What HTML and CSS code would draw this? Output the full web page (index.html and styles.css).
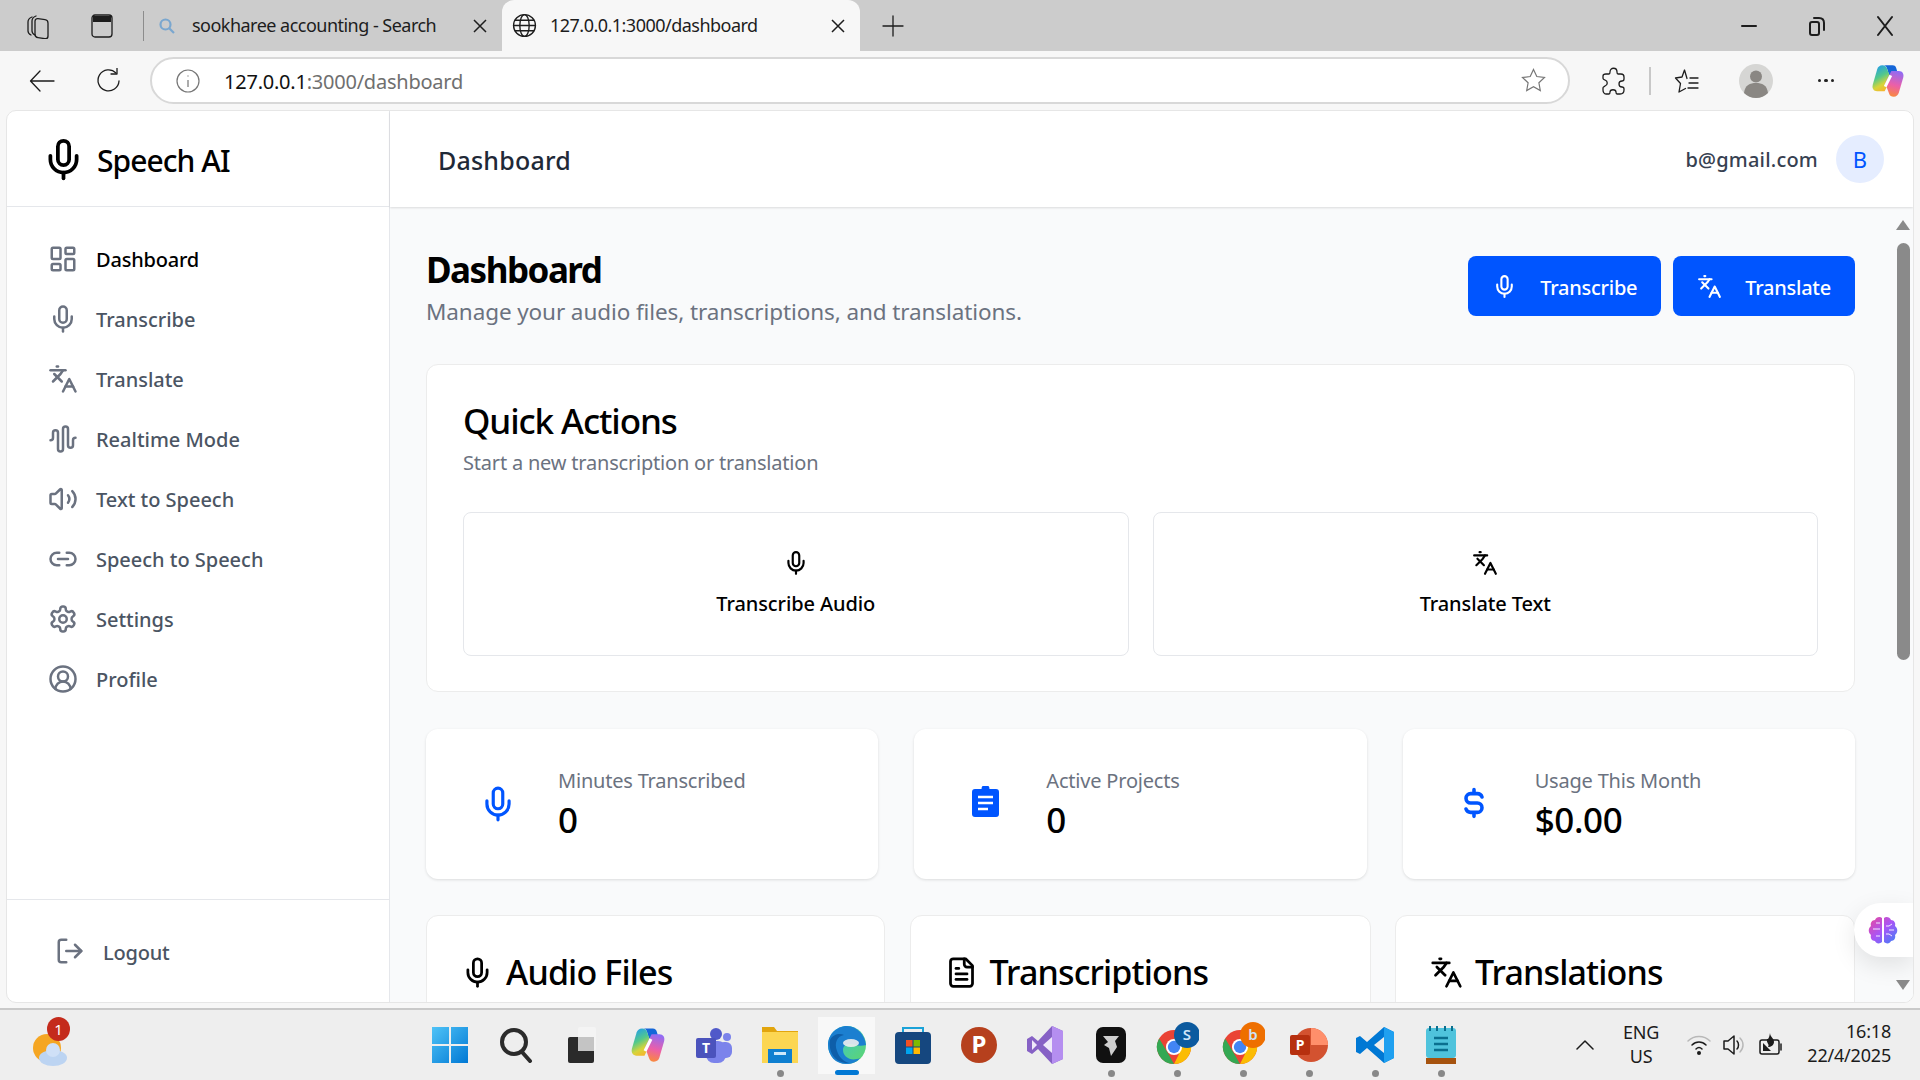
FILE: index.html
```html
<!DOCTYPE html>
<html lang="en">
<head>
<meta charset="utf-8">
<title>Speech AI</title>
<link rel="stylesheet" href="styles.css">
</head>
<body>
<svg class="defs" width="0" height="0" aria-hidden="true">
<defs>
<symbol id="i-dash" viewBox="0 0 24 24"><rect x="3" y="3" width="7" height="9" rx="1"/><rect x="14" y="3" width="7" height="5" rx="1"/><rect x="14" y="12" width="7" height="9" rx="1"/><rect x="3" y="16" width="7" height="5" rx="1"/></symbol>
<symbol id="i-mic" viewBox="0 0 24 24"><path d="M12 2a3 3 0 0 0-3 3v7a3 3 0 0 0 6 0V5a3 3 0 0 0-3-3Z"/><path d="M19 10v2a7 7 0 0 1-14 0v-2"/><path d="M12 19v3"/></symbol>
<symbol id="i-lang" viewBox="0 0 24 24"><path d="m5 8 6 6"/><path d="m4 14 6-6 2-3"/><path d="M2 5h12"/><path d="M7 2h1"/><path d="m22 22-5-10-5 10"/><path d="M14 18h6"/></symbol>
<symbol id="i-wave" viewBox="0 0 24 24"><path d="M2 13a2 2 0 0 0 2-2V7a2 2 0 0 1 4 0v13a2 2 0 0 0 4 0V4a2 2 0 0 1 4 0v13a2 2 0 0 0 4 0v-4a2 2 0 0 1 2-2"/></symbol>
<symbol id="i-vol" viewBox="0 0 24 24"><path d="M11 4.702a.705.705 0 0 0-1.203-.498L6.413 7.587A1.4 1.4 0 0 1 5.416 8H3a1 1 0 0 0-1 1v6a1 1 0 0 0 1 1h2.416a1.4 1.4 0 0 1 .997.413l3.383 3.384A.705.705 0 0 0 11 19.298z"/><path d="M16 9a5 5 0 0 1 0 6"/><path d="M19.4 18.4a9 9 0 0 0 0-12.7"/></symbol>
<symbol id="i-link" viewBox="0 0 24 24"><path d="M9 17H7A5 5 0 0 1 7 7h2"/><path d="M15 7h2a5 5 0 1 1 0 10h-2"/><path d="M8 12h8"/></symbol>
<symbol id="i-gear" viewBox="0 0 24 24"><path d="M12.22 2h-.44a2 2 0 0 0-2 2v.18a2 2 0 0 1-1 1.73l-.43.25a2 2 0 0 1-2 0l-.15-.08a2 2 0 0 0-2.73.73l-.22.38a2 2 0 0 0 .73 2.73l.15.1a2 2 0 0 1 1 1.72v.51a2 2 0 0 1-1 1.74l-.15.09a2 2 0 0 0-.73 2.73l.22.38a2 2 0 0 0 2.73.73l.15-.08a2 2 0 0 1 2 0l.43.25a2 2 0 0 1 1 1.73V20a2 2 0 0 0 2 2h.44a2 2 0 0 0 2-2v-.18a2 2 0 0 1 1-1.73l.43-.25a2 2 0 0 1 2 0l.15.08a2 2 0 0 0 2.73-.73l.22-.39a2 2 0 0 0-.73-2.73l-.15-.08a2 2 0 0 1-1-1.74v-.5a2 2 0 0 1 1-1.74l.15-.09a2 2 0 0 0 .73-2.73l-.22-.38a2 2 0 0 0-2.73-.73l-.15.08a2 2 0 0 1-2 0l-.43-.25a2 2 0 0 1-1-1.73V4a2 2 0 0 0-2-2z"/><circle cx="12" cy="12" r="3"/></symbol>
<symbol id="i-user" viewBox="0 0 24 24"><circle cx="12" cy="12" r="10"/><circle cx="12" cy="10" r="4"/><path d="M18 20a6 6 0 0 0-12 0"/></symbol>
<symbol id="i-out" viewBox="0 0 24 24"><path d="M9 21H5a2 2 0 0 1-2-2V5a2 2 0 0 1 2-2h4"/><path d="m16 17 5-5-5-5"/><path d="M21 12H9"/></symbol>
<symbol id="i-file" viewBox="0 0 24 24"><path d="M15 2H6a2 2 0 0 0-2 2v16a2 2 0 0 0 2 2h12a2 2 0 0 0 2-2V7Z"/><path d="M14 2v4a2 2 0 0 0 2 2h4"/><path d="M10 9H8"/><path d="M16 13H8"/><path d="M16 17H8"/></symbol>
<symbol id="i-chrome" viewBox="0 0 40 40"><circle cx="20" cy="20" r="18" fill="#ea4335" stroke="none"/><path d="M20 38A18 18 0 0 1 4.4 11l10 17Z" fill="#34a853" stroke="none"/><path d="M20 38a18 18 0 0 0 15.6-27H20l5 17Z" fill="#fbbc04" stroke="none"/><circle cx="20" cy="20" r="8.5" fill="#fff" stroke="none"/><circle cx="20" cy="20" r="6.5" fill="#4285f4" stroke="none"/></symbol>
<linearGradient id="g-cop" x1="0.2" y1="0" x2="0.6" y2="1"><stop offset="0" stop-color="#1e9bf0"/><stop offset=".45" stop-color="#54c98a"/><stop offset=".75" stop-color="#d6d43a"/><stop offset="1" stop-color="#f7b52c"/></linearGradient>
<linearGradient id="g-cop2" x1="0.6" y1="0" x2="0.4" y2="1"><stop offset="0" stop-color="#8f6cf5"/><stop offset=".55" stop-color="#ec5fa8"/><stop offset="1" stop-color="#f98a3c"/></linearGradient>
<symbol id="i-copilot" viewBox="0 0 32 32"><path d="M12 2h8c2 0 3 1 3.500 3L26 14h-8l-3-9.500C14.500 3 13.500 2 12 2Z" fill="#1466d8" stroke="none"/><path d="M11 2C8.500 2 7 3.500 6.400 5.500L2.500 19c-1 3.500.8 6 3.800 6H13l5.500-11-3.600-9.500C14.300 3 13 2 11 2Z" fill="url(#g-cop)" stroke="none"/><path d="M21 30c2.500 0 4-1.500 4.600-3.500L29.500 13c1-3.500-.8-6-3.800-6H19l-5.500 11 3.600 9.500c.6 1.500 1.900 2.500 3.900 2.500Z" fill="url(#g-cop2)" stroke="none"/><path d="M18.500 11 13.500 21" stroke="#fff" stroke-width="2.600" fill="none"/></symbol>
<linearGradient id="g-edge" x1="0" y1="0" x2="1" y2="1"><stop offset="0" stop-color="#37c4e0"/><stop offset="1" stop-color="#5fd66a"/></linearGradient>
<linearGradient id="g-win" x1="0" y1="0" x2="1" y2="1"><stop offset="0" stop-color="#4fc3f7"/><stop offset="1" stop-color="#0078d4"/></linearGradient>
<linearGradient id="g-brain" x1="0" y1="0" x2="1" y2="1"><stop offset="0" stop-color="#ec4899"/><stop offset=".5" stop-color="#a855f7"/><stop offset="1" stop-color="#3b82f6"/></linearGradient>
</defs>
</svg>

<div class="tabstrip">
  <span class="tb-btn"><svg class="chrome-ic" width="24" height="26" viewBox="0 0 24 26"><rect x="9" y="4" width="13" height="19" rx="3" transform="skewY(8)"/><path d="M6 4C3 5 2 6 2 9v9c0 2 1 3 3 4"/><path d="M10 3C7 4 6 5 6 8v10c0 2 1 3 3 4"/></svg></span>
  <span class="tb-btn"><svg class="chrome-ic" width="22" height="24" viewBox="0 0 22 24"><rect x="1" y="1" width="20" height="22" rx="3"/><path class="solid" d="M2 2h18v6H2z"/></svg></span>
  <span class="tab-sep"></span>
  <div class="tab">
    <svg class="tab-fav" width="18" height="18" viewBox="0 0 18 18"><circle cx="7.500" cy="7.500" r="5"/><path d="m11 11 5 5"/></svg>
    <span class="tab-title">sookharee accounting - Search</span>
    <svg class="tab-x" width="14" height="14" viewBox="0 0 14 14"><path d="m1 1 12 12M13 1 1 13"/></svg>
  </div>
  <div class="tab tab-active">
    <svg class="chrome-ic" width="25" height="25" viewBox="0 0 24 24"><circle cx="12" cy="12" r="10.500"/><ellipse cx="12" cy="12" rx="4.500" ry="10.500"/><path d="M1.500 12h21M3 7h18M3 17h18"/></svg>
    <span class="tab-title">127.0.0.1:3000/dashboard</span>
    <svg class="tab-x" width="14" height="14" viewBox="0 0 14 14"><path d="m1 1 12 12M13 1 1 13"/></svg>
  </div>
  <span class="tb-plus"><svg class="chrome-ic" width="22" height="22" viewBox="0 0 22 22"><path d="M11 1v20M1 11h20"/></svg></span>
  <span class="grow"></span>
  <span class="win-btn"><svg class="chrome-ic bold" width="16" height="4" viewBox="0 0 16 4"><path d="M1 2h14"/></svg></span>
  <span class="win-btn"><svg class="chrome-ic bold" width="16" height="22" viewBox="0 0 16 22"><rect x="1" y="7" width="9" height="13" rx="2"/><path d="M5 3h5c3 0 5 2 5 5v7"/></svg></span>
  <span class="win-btn"><svg class="chrome-ic bold" width="16" height="22" viewBox="0 0 16 22"><path d="m1 2 14 18M15 2 1 20"/></svg></span>
</div>

<div class="toolbar">
  <span class="tool-btn"><svg class="chrome-ic" width="26" height="22" viewBox="0 0 26 22"><path d="M25 11H2M11 1 1.500 11 11 21"/></svg></span>
  <span class="tool-btn"><svg class="chrome-ic" width="25" height="26" viewBox="0 0 25 26"><path d="M21 5a10.500 10.500 0 1 0 3 8"/><path d="M22 0v6h-6"/></svg></span>
  <div class="address">
    <svg class="info-ic" width="24" height="24" viewBox="0 0 24 24"><circle cx="12" cy="12" r="11"/><path d="M12 11v7M12 6.500v1"/></svg>
    <span class="url"><span class="url-host">127.0.0.1</span>:3000/dashboard</span>
    <span class="grow"></span>
    <svg class="info-ic" width="25" height="25" viewBox="0 0 25 25"><path d="m12.500 1.500 3.300 7 7.700 1-5.600 5.300 1.400 7.700-6.800-3.700-6.800 3.700 1.400-7.700L1.500 9.500l7.700-1z"/></svg>
  </div>
  <span class="tool-slot tool-first"><svg class="chrome-ic" width="24" height="28" viewBox="0 0 24 28"><path d="M9 5c0-5 7-5 7 0 0 1 0 2 1 2h3c2 0 3 1 3 3v2c0 1-1 2-2 2-4 0-4 6 0 6 1 0 2 1 2 2v1c0 2-1 4-4 4h-3c-1 0-1-1-1-2 0-3-6-3-6 0 0 1 0 2-1 2H5c-2 0-3-2-3-4v-2c0-1 1-1 2-2 3-1 3-5 0-6-1 0-2-1-2-2V9c0-1 1-2 3-2h3c1 0 1-1 1-2Z" transform="translate(-1 0)"/></svg></span>
  <span class="tool-sep"></span>
  <span class="tool-slot"><svg class="chrome-ic" width="25" height="26" viewBox="0 0 25 26"><path d="M13 10.500 10.500 2 8 9 1.500 10l5 5.500L5 24l6.500-3.500"/><path d="M16 10h8M15 15h9M14 20h10"/></svg></span>
  <span class="tool-slot"><svg width="34" height="34" viewBox="0 0 34 34"><circle cx="17" cy="17" r="17" fill="#d6d6d4"/><circle cx="17" cy="12.500" r="6" fill="#8a8783"/><path d="M5 29c1-8 6-10 12-10s11 2 12 10a17 17 0 0 1-24 0Z" fill="#8a8783"/></svg></span>
  <span class="tool-slot dots"><i></i><i></i><i></i></span>
  <span class="tool-slot tool-last"><svg width="36" height="36"><use href="#i-copilot"/></svg></span>
</div>

<div class="app">
  <aside class="sidebar">
    <div class="logo">
      <svg class="logo-ic"><use href="#i-mic"/></svg>
      <span class="logo-text">Speech AI</span>
    </div>
    <nav class="nav">
      <a class="nav-item active"><svg class="ic"><use href="#i-dash"/></svg><span>Dashboard</span></a>
      <a class="nav-item"><svg class="ic"><use href="#i-mic"/></svg><span>Transcribe</span></a>
      <a class="nav-item"><svg class="ic"><use href="#i-lang"/></svg><span>Translate</span></a>
      <a class="nav-item"><svg class="ic"><use href="#i-wave"/></svg><span>Realtime Mode</span></a>
      <a class="nav-item"><svg class="ic"><use href="#i-vol"/></svg><span>Text to Speech</span></a>
      <a class="nav-item"><svg class="ic"><use href="#i-link"/></svg><span>Speech to Speech</span></a>
      <a class="nav-item"><svg class="ic"><use href="#i-gear"/></svg><span>Settings</span></a>
      <a class="nav-item"><svg class="ic"><use href="#i-user"/></svg><span>Profile</span></a>
    </nav>
    <div class="logout"><svg class="ic"><use href="#i-out"/></svg><span>Logout</span></div>
  </aside>
  <div class="main">
    <header class="topbar">
      <span class="topbar-title">Dashboard</span>
      <span class="grow"></span>
      <span class="email">b@gmail.com</span>
      <span class="avatar">B</span>
    </header>
    <div class="scroller">
      <main class="content">
        <div class="page-head">
          <div class="page-title">
            <h1>Dashboard</h1>
            <p>Manage your audio files, transcriptions, and translations.</p>
          </div>
          <div class="page-actions">
            <a class="btn"><svg class="btn-ic"><use href="#i-mic"/></svg><span>Transcribe</span></a>
            <a class="btn"><svg class="btn-ic"><use href="#i-lang"/></svg><span>Translate</span></a>
          </div>
        </div>
        <section class="card quick">
          <h2>Quick Actions</h2>
          <p class="quick-sub">Start a new transcription or translation</p>
          <div class="quick-grid">
            <a class="quick-item"><svg class="quick-ic"><use href="#i-mic"/></svg><span>Transcribe Audio</span></a>
            <a class="quick-item"><svg class="quick-ic"><use href="#i-lang"/></svg><span>Translate Text</span></a>
          </div>
        </section>
        <section class="stats">
          <div class="stat">
            <span class="stat-slot"><svg class="stat-ic"><use href="#i-mic"/></svg></span>
            <div class="stat-text"><div class="stat-label">Minutes Transcribed</div><div class="stat-value">0</div></div>
          </div>
          <div class="stat">
            <span class="stat-slot"><svg class="stat-clip" width="27" height="31" viewBox="0 0 27 31"><path d="M3 3h6.500a4 4 0 0 1 8 0H24a3 3 0 0 1 3 3v22a3 3 0 0 1-3 3H3a3 3 0 0 1-3-3V6a3 3 0 0 1 3-3Z"/><path class="clip-line" d="M6 11h15M6 17h15M6 23h10"/></svg></span>
            <div class="stat-text"><div class="stat-label">Active Projects</div><div class="stat-value">0</div></div>
          </div>
          <div class="stat">
            <span class="stat-slot"><svg class="stat-dollar" viewBox="0 0 24 24"><path d="M12 2v3M12 19v3M18 7.500C17.500 6 16 5 14.500 5h-5a3.500 3.500 0 0 0 0 7h5a3.500 3.500 0 0 1 0 7h-5C8 19 6.500 18 6 16.500"/></svg></span>
            <div class="stat-text"><div class="stat-label">Usage This Month</div><div class="stat-value">$0.00</div></div>
          </div>
        </section>
        <section class="lists">
          <div class="card list-card"><svg class="list-ic"><use href="#i-mic"/></svg><h3>Audio Files</h3></div>
          <div class="card list-card"><svg class="list-ic"><use href="#i-file"/></svg><h3>Transcriptions</h3></div>
          <div class="card list-card"><svg class="list-ic"><use href="#i-lang"/></svg><h3>Translations</h3></div>
        </section>
      </main>
      <div class="scrollbar">
        <span class="arrow-up"></span>
        <span class="thumb"></span>
        <span class="grow"></span>
        <span class="arrow-down"></span>
      </div>
    </div>
    <div class="bubble">
      <svg width="30" height="28" viewBox="0 0 30 28"><path fill="url(#g-brain)" d="M14 2v24c-2 2-6 2-7-1-3 0-5-3-4-6-3-2-3-7 0-9-1-3 1-6 4-6 1-3 5-4 7-2Zm2 0c2-2 6-1 7 2 3 0 5 3 4 6 3 2 3 7 0 9 1 3-1 6-4 6-1 3-5 3-7 1Z"/><path d="M5 13h7M8 7h4M8 20h4M18 10h3l3-2M18 18h3l3 2M21 14h5" stroke="#f3e8ff" stroke-width="1" fill="none"/></svg>
    </div>
  </div>
</div>

<footer class="taskbar">
  <span class="task-slot weather">
    <svg width="36" height="46" viewBox="0 0 36 46"><circle cx="16" cy="26" r="14" fill="#f5a623"/><ellipse cx="22" cy="36" rx="14" ry="8" fill="#bcd4f2"/><circle cx="22" cy="28" r="7" fill="#cfe0f7"/></svg>
    <span class="badge">1</span>
  </span>
  <div class="task-apps">
    <span class="task-slot"><svg width="36" height="36" viewBox="0 0 36 36"><path fill="url(#g-win)" d="M0 0h17v17H0zM19 0h17v17H19zM0 19h17v17H0zM19 19h17v17H19z"/></svg></span>
    <span class="task-slot"><svg width="34" height="36" viewBox="0 0 34 36" fill="none" stroke="#2b2b2b" stroke-width="4"><circle cx="15" cy="15" r="12"/><path d="m23 25 8 9" stroke-linecap="round"/></svg></span>
    <span class="task-slot"><svg width="28" height="36" viewBox="0 0 28 36"><rect x="10" y="0" width="18" height="24" rx="2" fill="#f4f4f4"/><rect x="0" y="10" width="26" height="26" rx="2" fill="#2a2a2a"/><rect x="10" y="10" width="16" height="14" fill="#c4c4c4"/></svg></span>
    <span class="task-slot"><svg width="38" height="38"><use href="#i-copilot"/></svg></span>
    <span class="task-slot"><svg width="36" height="36" viewBox="0 0 36 36"><circle cx="31" cy="10" r="4" fill="#7b83eb"/><rect x="22" y="15" width="14" height="16" rx="6" fill="#7b83eb"/><circle cx="20" cy="7" r="6" fill="#5059c9"/><rect x="10" y="14" width="20" height="22" rx="8" fill="#7b83eb"/><rect x="0" y="11" width="20" height="20" rx="2" fill="#4b53bc"/><text class="tk-t" x="10" y="26" text-anchor="middle">T</text></svg></span>
    <span class="task-slot run"><svg width="36" height="36" viewBox="0 0 36 36"><path d="M0 0h12l3 4h21v32H0Z" fill="#e2a50d"/><rect y="5" width="36" height="31" fill="#fcd652"/><path d="M6 22h24v14H6Z" fill="#0f7fd0"/><rect x="12" y="25" width="12" height="3" fill="#cde8fa"/></svg></span>
    <span class="task-slot current"><svg width="38" height="38" viewBox="0 0 38 38"><circle cx="19" cy="19" r="19" fill="url(#g-edge)"/><path d="M19 0C8 0 0 9 0 19c0 11 8 19 18 19 6 0 11-2 14-6-9 4-17-1-17-8 0-4 3-6 7-6 5 0 8 3 16 1C37 9 29 0 19 0Z" fill="#1b7fd0"/><path d="M2 14c3-6 10-7 14-5-7 1-10 8-7 16 2 6 6 10 12 12C9 38 0 28 2 14Z" fill="#0e5ea9"/><ellipse cx="23" cy="17" rx="8" ry="4" fill="#eee" opacity=".9"/></svg></span>
    <span class="task-slot"><svg width="36" height="38" viewBox="0 0 36 38"><path d="M8 8V2h20v6" fill="none" stroke="#1aa2d8" stroke-width="2"/><rect y="6" width="36" height="32" rx="4" fill="#15477f"/><path d="M11 14h6.500v6.500H11z" fill="#f25022"/><path d="M18.500 14H25v6.500h-6.500z" fill="#7fba00"/><path d="M11 21.500h6.500V28H11z" fill="#00a4ef"/><path d="M18.500 21.500H25V28h-6.500z" fill="#ffb900"/></svg></span>
    <span class="task-slot"><svg width="36" height="36" viewBox="0 0 36 36"><circle cx="18" cy="18" r="18" fill="#b6401d"/><text class="tk-p" x="18" y="26" text-anchor="middle">P</text></svg></span>
    <span class="task-slot"><svg width="36" height="38" viewBox="0 0 36 38"><path d="M25 0 36 5v28l-11 5-14-15-6 5-5-3V13l5-3 6 5Z" fill="#8661c5"/><path d="m25 0 11 5v28l-11 5Z" fill="#b58ef0"/><path d="M5 14v10l5-5Z" fill="#efe9fa"/><path d="M25 11v16l-9-8Z" fill="#efe9fa"/></svg></span>
    <span class="task-slot run"><svg width="30" height="36" viewBox="0 0 30 36"><rect width="30" height="36" rx="7" fill="#111"/><path d="M7 9h16l-4 5 2 6-6 9-2-8-5-3 4-3Z" fill="#cfcfcf"/></svg></span>
    <span class="task-slot run"><svg width="44" height="46" viewBox="0 0 44 46"><use href="#i-chrome" x="0" y="6" width="38" height="38"/><circle cx="32" cy="13" r="13" fill="#0b5a9f"/><text class="tk-b" x="32" y="18" text-anchor="middle">S</text></svg></span>
    <span class="task-slot run"><svg width="44" height="46" viewBox="0 0 44 46"><use href="#i-chrome" x="0" y="6" width="38" height="38"/><circle cx="32" cy="13" r="13" fill="#ee6f00"/><text class="tk-b" x="32" y="18" text-anchor="middle">b</text></svg></span>
    <span class="task-slot run"><svg width="38" height="38" viewBox="0 0 38 38"><circle cx="21" cy="19" r="17" fill="#d35230"/><path d="M21 2a17 17 0 0 1 17 17H21Z" fill="#ff8f6b"/><rect x="0" y="9" width="20" height="20" rx="2" fill="#b7300f"/><text class="tk-t" x="10" y="24" text-anchor="middle">P</text></svg></span>
    <span class="task-slot run"><svg width="38" height="38" viewBox="0 0 38 38"><path d="M28 1 38 6v26l-10 5L11 22l-7 6-4-2v-14l4-2 7 6Z" fill="#0078d4"/><path d="M28 1 38 6v26l-10 5Z" fill="#1fa0f0"/><path d="M28 11v16l-10-8Z" fill="#eee"/></svg></span>
    <span class="task-slot run"><svg width="30" height="38" viewBox="0 0 30 38"><rect y="2" width="30" height="30" rx="3" fill="#4fc3dc"/><rect y="32" width="30" height="6" fill="#a6530f"/><path d="M8 12h14M8 18h14M8 24h14" stroke="#0a6f8f" stroke-width="2.500"/><path d="M4 0v5M11 0v5M19 0v5M26 0v5" stroke="#0a6f8f" stroke-width="2"/></svg></span>
  </div>
  <span class="grow"></span>
  <div class="tray">
    <svg class="tray-ic chev" width="18" height="10" viewBox="0 0 18 10"><path d="m1 9 8-8 8 8"/></svg>
    <div class="lang"><span>ENG</span><span>US</span></div>
    <svg class="tray-ic wifi" width="26" height="22" viewBox="0 0 26 22"><path class="faint" d="M2 7c6-6 16-6 22 0"/><path d="M6 11c4-4 10-4 14 0M10 15c2-2 4-2 6 0"/><circle class="fill" cx="13" cy="19" r="2"/></svg>
    <svg class="tray-ic vol" width="24" height="24" viewBox="0 0 24 24"><path d="M2 8h4l6-5v18l-6-5H2Z"/><path d="M15 8c2 2 2 6 0 8"/><path class="faint" d="M18 5c4 4 4 10 0 14"/></svg>
    <svg class="tray-ic bat" width="26" height="24" viewBox="0 0 26 24"><rect x="2" y="7" width="19" height="14" rx="2"/><path d="M23 11v6"/><path class="fill" d="M12 0c0 4 4 5 4 9 0 3-3 5-6 5 2-3-2-4-1-8 1 0 2 0 3-6ZM5 10l8 8H5Z"/></svg>
    <div class="clock"><span>16:18</span><span>22/4/2025</span></div>
  </div>
</footer>
</body>
</html>
```

FILE: styles.css
```css
* { box-sizing: border-box; }
html, body { margin: 0; height: 100%; }
body {
  width: 1920px; height: 1080px; overflow: hidden;
  display: flex; flex-direction: column;
  background: #f7f7f7; color: #000;
  font-family: "Noto Sans", "Open Sans", "Liberation Sans", sans-serif;
}
h1, h2, h3, p { margin: 0; }
.defs { position: absolute; }
.grow { flex: 1; }
svg { display: block; flex: none; }
svg use, symbol { fill: none; }

/* browser chrome */
.chrome-ic { fill: none; stroke: #1d1d1d; stroke-width: 1.3; stroke-linecap: round; stroke-linejoin: round; }
.chrome-ic.bold { stroke-width: 2; }
.chrome-ic .solid { fill: #1d1d1d; stroke: none; }
.tabstrip { height: 51px; background: #ccc; display: flex; align-items: center; padding-left: 6px; flex: none; }
.tb-btn { width: 64px; display: flex; justify-content: center; }
.tab-sep { width: 1px; height: 30px; background: #8c8c8c; margin: 0 6px 0 9px; }
.tab { width: 352px; height: 51px; display: flex; align-items: center; padding: 0 15px 0 6px; font-size: 18px; letter-spacing: -.52px; color: #1d1d1d; }
.tab-title { flex: 1; white-space: nowrap; padding-bottom: 1px; }
.tab-fav { fill: none; stroke: #7aa7cf; stroke-width: 2.200; margin: 0 16px 0 2px; }
.tab-x { fill: none; stroke: #1d1d1d; stroke-width: 1.500; }
.tab-active { width: 358px; background: #f7f7f7; border-radius: 12px 12px 0 0; padding: 0 15px 0 10px; gap: 13px; }
.tb-plus { width: 66px; display: flex; justify-content: center; }
.win-btn { width: 68px; display: flex; justify-content: center; }
.win-btn:last-child { margin-right: 1px; }

.toolbar { height: 59px; flex: none; display: flex; align-items: center; padding: 0 0 0 9px; }
.tool-btn { width: 66px; display: flex; justify-content: center; }
.tool-btn:nth-child(2) svg { margin-left: -2px; }
.address { width: 1420px; height: 47px; margin-left: 9px; background: #fff; border: 2px solid #d8d8d8; border-radius: 24px; display: flex; align-items: center; padding: 0 22px 0 24px; }
.info-ic { fill: none; stroke: #767676; stroke-width: 1.200; }
.url { margin-left: 24px; font-size: 20px; letter-spacing: -.23px; color: #6f6f6f; white-space: nowrap; padding-top: 1px; }
.url-host { color: #111; }
.tool-slot { width: 70px; display: flex; justify-content: center; align-items: center; }
.tool-first { margin-left: 9px; }
.tool-sep { width: 2px; height: 28px; background: #c8c8c8; }
.dots { gap: 3px; }
.dots i { width: 3.500px; height: 3.500px; border-radius: 50%; background: #222; }
.tool-last { width: 54px; }

/* app window */
.app { height: 893px; margin: 0 6px; background: #fff; border: 1px solid #e6e6e6; border-radius: 10px; display: flex; overflow: hidden; flex: none; }
.sidebar { width: 383px; flex: none; border-right: 1px solid #e5e7eb; display: flex; flex-direction: column; }
.logo { height: 96px; border-bottom: 1px solid #e5e7eb; display: flex; align-items: center; padding-left: 34px; gap: 11px; flex: none; }
.logo-ic { width: 45px; height: 45px; margin-top: 2px; fill: none; stroke: #000; stroke-width: 2; stroke-linecap: round; stroke-linejoin: round; }
.logo-text { font-size: 30px; font-weight: 500; letter-spacing: -.95px; line-height: 40px; padding-top: 4px; }
.ic { width: 30px; height: 30px; fill: none; stroke: #6b7280; stroke-width: 2; stroke-linecap: round; stroke-linejoin: round; }
.nav { flex: 1; padding-top: 22px; }
.nav-item { height: 60px; display: flex; align-items: center; gap: 18px; padding-left: 41px; font-size: 20px; font-weight: 500; letter-spacing: -.02px; color: #4b5563; }
.nav-item.active { color: #000; letter-spacing: -.2px; }
.logout { height: 103px; flex: none; border-top: 1px solid #e5e7eb; display: flex; align-items: center; gap: 18px; padding-left: 48px; font-size: 20px; font-weight: 500; letter-spacing: -.2px; color: #4b5563; }
.logout span { padding-top: 2px; }

.main { flex: 1; min-width: 0; display: flex; flex-direction: column; position: relative; }
.topbar { height: 96px; flex: none; background: #fff; display: flex; align-items: center; padding: 0 29px 0 48px; box-shadow: 0 1px 2px rgba(0,0,0,.12); position: relative; z-index: 1; }
.topbar-title { font-size: 25px; font-weight: 500; color: #1f2937; letter-spacing: .2px; padding-top: 2px; }
.email { font-size: 20px; font-weight: 500; color: #374151; letter-spacing: .2px; margin-right: 18px; padding-top: 1px; }
.avatar { width: 48px; height: 48px; border-radius: 50%; background: #e5edff; color: #0055ff; font-size: 22px; display: flex; align-items: center; justify-content: center; }

.scroller { flex: 1; min-height: 0; display: flex; background: #f9fafb; }
.content { flex: 1; min-width: 0; padding: 43px 38px 0 36px; overflow: hidden; }
.page-head { display: flex; justify-content: space-between; align-items: flex-start; margin-bottom: 38px; }
h1 { font-size: 35px; line-height: 40px; font-weight: 700; letter-spacing: -1.5px; }
.page-title p { margin-top: 8px; font-size: 22.500px; line-height: 28px; color: #6b7280; letter-spacing: -.1px; }
.page-actions { display: flex; gap: 12px; margin-top: 6px; }
.btn { height: 60px; padding: 0 24px 0 24px; display: flex; align-items: center; gap: 23px; background: #0055ff; color: #fff; border-radius: 8px; font-size: 20px; font-weight: 500; letter-spacing: -.25px; }
.btn span { padding-top: 2px; }
.btn-ic { width: 25px; height: 25px; fill: none; stroke: #fff; stroke-width: 2; stroke-linecap: round; stroke-linejoin: round; }

.card { background: #fff; border: 1px solid #ececec; border-radius: 12px; }
.quick { height: 328px; padding: 34px 36px 0; }
h2 { font-size: 35px; line-height: 44px; font-weight: 500; letter-spacing: -1.1px; }
.quick-sub { margin-top: 6px; font-size: 20px; line-height: 28px; color: #6b7280; letter-spacing: -.2px; }
.quick-grid { margin-top: 35px; display: grid; grid-template-columns: 1fr 1fr; gap: 24px; }
.quick-item { height: 144px; border: 1px solid #e5e7eb; border-radius: 8px; display: flex; flex-direction: column; align-items: center; justify-content: center; gap: 14px; font-size: 20px; font-weight: 500; letter-spacing: -.1px; line-height: 28px; }
.quick-ic { width: 26px; height: 26px; fill: none; stroke: #000; stroke-width: 2; stroke-linecap: round; stroke-linejoin: round; }

.stats { margin-top: 37px; display: grid; grid-template-columns: repeat(3, 1fr); gap: 36px; }
.stat { height: 150px; background: #fff; border-radius: 12px; box-shadow: 0 1px 3px rgba(0,0,0,.12); display: flex; align-items: center; padding-left: 54px; gap: 42px; }
.stat-text { padding-top: 1px; }
.stat-slot { width: 36px; display: flex; justify-content: center; }
.stat-ic { width: 38px; height: 38px; fill: none; stroke: #0055ff; stroke-width: 2; stroke-linecap: round; stroke-linejoin: round; }
.stat-clip { fill: #0055ff; margin-top: -5px; margin-left: -1px; }
.clip-line { fill: none; stroke: #fff; stroke-width: 2.500; }
.stat-dollar { width: 32px; height: 32px; fill: none; stroke: #0055ff; stroke-width: 2.700; stroke-linecap: round; margin-top: -2px; margin-left: -2px; }
.stat-label { font-size: 20px; line-height: 28px; color: #6b7280; letter-spacing: -.2px; }
.stat-value { margin-top: 3px; font-size: 35px; line-height: 44px; font-weight: 500; letter-spacing: -.4px; }

.lists { margin-top: 36px; display: grid; grid-template-columns: 459px 461px 460px; gap: 24.500px; }
.list-card { height: 200px; padding: 34px 36px 0; display: flex; align-items: flex-start; gap: 14px; }
.list-ic { width: 33px; height: 33px; margin: 6px -2px 0 -2px; fill: none; stroke: #000; stroke-width: 2; stroke-linecap: round; stroke-linejoin: round; }
h3 { font-size: 34px; line-height: 44px; font-weight: 500; letter-spacing: -.85px; }

.scrollbar { width: 20px; flex: none; display: flex; flex-direction: column; align-items: center; padding: 13px 0 12px; background: #f9fafb; }
.arrow-up, .arrow-down { width: 0; height: 0; border-left: 7px solid transparent; border-right: 7px solid transparent; }
.arrow-up { border-bottom: 10px solid #8a8a8a; }
.arrow-down { border-top: 10px solid #8a8a8a; }
.thumb { width: 13px; height: 417px; margin-top: 13px; background: #8a8a8a; border-radius: 7px; }

.bubble { position: absolute; right: 0; top: 792px; width: 59px; height: 54px; background: #fff; border-radius: 27px 0 0 27px; display: flex; align-items: center; padding-left: 14px; box-shadow: 0 8px 24px rgba(0,0,0,.1); z-index: 2; }

/* taskbar */
.taskbar { margin-top: 5px; height: 72px; flex: 1; background: #eee; border-top: 2px solid #c9c9c9; display: flex; align-items: center; padding-left: 16px; }
.task-slot { width: 66px; height: 70px; display: flex; align-items: center; justify-content: center; position: relative; flex: none; }
.weather { margin-right: 335px; }
.badge { position: absolute; left: 31px; top: 7px; width: 23px; height: 24px; border-radius: 50%; background: #c42b1c; color: #fff; font-size: 15px; display: flex; align-items: center; justify-content: center; }
.task-apps { display: flex; gap: .1px; }
.run::after, .current::after { content: ""; position: absolute; left: 30px; bottom: 3px; width: 7px; height: 7px; border-radius: 50%; background: #888; }
.current { background: linear-gradient(#f8f8f8, #f8f8f8) center / 57px 57px no-repeat; }
.current::after { left: 21px; bottom: 5px; width: 24px; height: 5px; border-radius: 3px; background: #0078d4; }
.tk-t { font-size: 14px; font-weight: 700; fill: #fff; font-family: "Noto Sans", sans-serif; }
.tk-p { font-size: 24px; font-weight: 700; fill: #fff; font-family: "Noto Sans", sans-serif; }
.tk-b { font-size: 15px; font-weight: 600; fill: #cfe4f7; font-family: "Noto Sans", sans-serif; }
.tray { display: flex; align-items: center; font-size: 18px; letter-spacing: -.2px; color: #1b1b1b; padding-right: 29px; }
.tray-ic { fill: none; stroke: #1b1b1b; stroke-width: 1.500; stroke-linecap: round; stroke-linejoin: round; }
.tray-ic .fill { fill: #1b1b1b; stroke: none; }
.tray-ic .faint { stroke: #b8b8b8; }
.chev { margin-right: 19px; }
.lang { width: 56px; display: flex; flex-direction: column; align-items: center; line-height: 24px; margin: 0 17px 3px 0; }
.wifi { margin-right: 10px; }
.vol { margin-right: 12px; }
.bat { margin-right: 15px; }
.clock { display: flex; flex-direction: column; align-items: flex-end; line-height: 24px; width: 92px; margin-bottom: 4px; }
```
